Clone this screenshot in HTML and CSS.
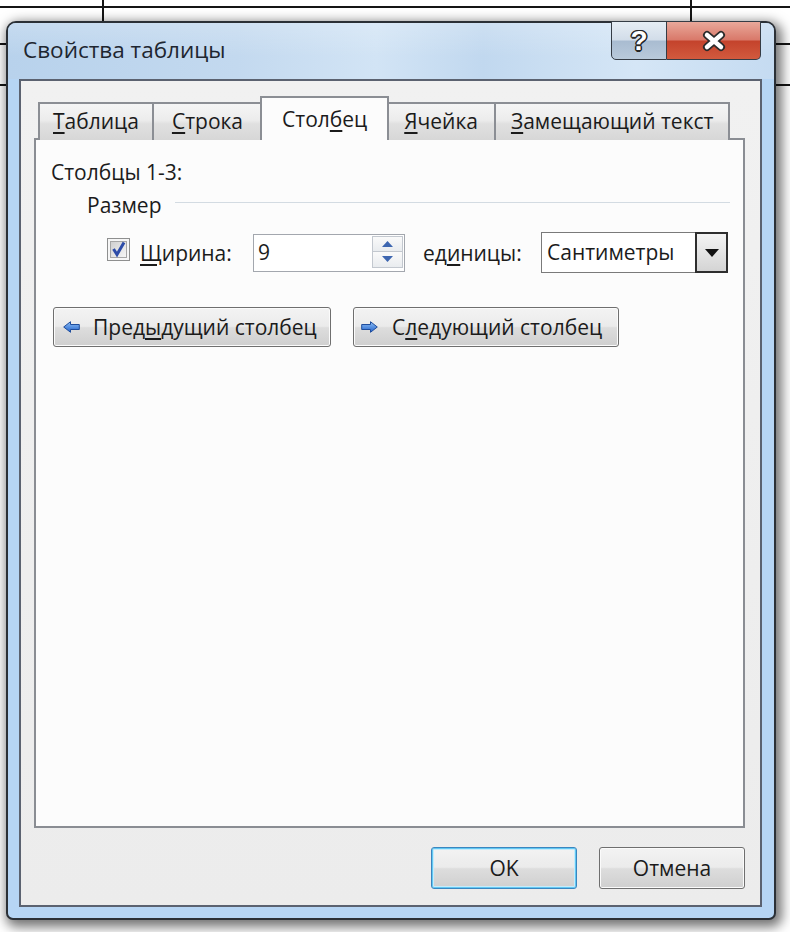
FILE: index.html
```html
<!DOCTYPE html>
<html lang="ru">
<head>
<meta charset="utf-8">
<title>Свойства таблицы</title>
<link rel="stylesheet" href="styles.css">
</head>
<body>
<div class="dialog">
  <div class="titlebar">
    <div class="title">Свойства таблицы</div>
    <div class="caption-buttons">
      <div class="cap-btn cap-help"><span class="help-glyph">?</span></div>
      <div class="cap-btn cap-close">
        <svg width="28" height="22" viewBox="0 0 28 22"><path d="M7 5 L21 17 M21 5 L7 17" stroke="#2b2b2b" stroke-width="8" stroke-linecap="round" fill="none"/><path d="M7 5 L21 17 M21 5 L7 17" stroke="#ffffff" stroke-width="4.5" stroke-linecap="round" fill="none"/></svg>
      </div>
    </div>
  </div>
  <div class="frame-body">
    <div class="client">
      <div class="tabs">
        <div class="tab tab-table"><u>Т</u>аблица</div>
        <div class="tab tab-row"><u>С</u>трока</div>
        <div class="tab active">Стол<u>б</u>ец</div>
        <div class="tab tab-cell"><u>Я</u>чейка</div>
        <div class="tab"><u>З</u>амещающий текст</div>
      </div>
      <div class="panel">
        <div class="caption">Столбцы 1-3:</div>
        <div class="group-header"><span>Размер</span><span class="rule"></span></div>
        <div class="size-row">
          <span class="checkbox">
            <svg width="23" height="23" viewBox="0 0 23 23">
              <defs><linearGradient id="cbg" x1="0" y1="0" x2="1" y2="1"><stop offset="0" stop-color="#cfcfcf"/><stop offset="1" stop-color="#f7f7f7"/></linearGradient></defs>
              <rect x="0.5" y="0.5" width="22" height="22" fill="#f6f6f6" stroke="#8e8f8f"/>
              <rect x="3.5" y="3.5" width="16" height="16" fill="url(#cbg)" stroke="#a6a6a6"/>
              <path d="M6.5 11 L10 16.5 L17 4.5" fill="none" stroke="#2d4ca8" stroke-width="3"/>
            </svg>
          </span>
          <span class="label width-label"><u>Щ</u>ирина:</span>
          <div class="spin">
            <span class="spin-value">9</span>
            <span class="spin-buttons">
              <span class="spin-half"><svg width="11" height="6" viewBox="0 0 11 6"><polygon points="0,6 5.5,0 11,6" fill="#3d66b0"/></svg></span>
              <span class="spin-half"><svg width="11" height="6" viewBox="0 0 11 6"><polygon points="0,0 5.5,6 11,0" fill="#3d66b0"/></svg></span>
            </span>
          </div>
          <span class="label units-label">ед<u>и</u>ницы:</span>
          <div class="combo">
            <span class="combo-value">Сантиметры</span>
            <span class="combo-btn"><svg width="14" height="8" viewBox="0 0 14 8"><polygon points="0,0 14,0 7,8" fill="#111"/></svg></span>
          </div>
        </div>
        <div class="nav-row">
          <button class="btn nav-btn prev-btn">
            <svg width="17" height="12" viewBox="0 0 17 12"><defs><linearGradient id="arl" x1="0" y1="0" x2="0" y2="1"><stop offset="0" stop-color="#8fc0f6"/><stop offset="1" stop-color="#2262cb"/></linearGradient></defs><polygon points="0.7,6 7.5,0.7 7.5,3.5 16.3,3.5 16.3,8.5 7.5,8.5 7.5,11.3" fill="url(#arl)" stroke="#1f4d9c" stroke-width="1" stroke-linejoin="round"/></svg>
            <span>Пред<u>ы</u>дущий столбец</span>
          </button>
          <button class="btn nav-btn next-btn">
            <svg width="17" height="12" viewBox="0 0 17 12"><defs><linearGradient id="arr" x1="0" y1="0" x2="0" y2="1"><stop offset="0" stop-color="#8fc0f6"/><stop offset="1" stop-color="#2262cb"/></linearGradient></defs><polygon points="16.3,6 9.5,0.7 9.5,3.5 0.7,3.5 0.7,8.5 9.5,8.5 9.5,11.3" fill="url(#arr)" stroke="#1f4d9c" stroke-width="1" stroke-linejoin="round"/></svg>
            <span>С<u>л</u>едующий столбец</span>
          </button>
        </div>
      </div>
      <div class="footer">
        <button class="btn footer-btn default">OK</button>
        <button class="btn footer-btn">Отмена</button>
      </div>
    </div>
  </div>
</div>
</body>
</html>
```

FILE: styles.css
```css
* { box-sizing: border-box; }

html, body {
  margin: 0;
  height: 932px;
  overflow: hidden;
}

body {
  width: 790px;
  position: relative;
  font-family: "Open Sans", "Noto Sans", "DejaVu Sans", sans-serif;
  font-size: 21px;
  color: #1b1b1b;
  background-color: #ffffff;
  background-image:
    linear-gradient(#151515, #151515),
    linear-gradient(#151515, #151515),
    linear-gradient(#151515, #151515),
    linear-gradient(#151515, #151515),
    linear-gradient(#151515, #151515);
  background-size: 100% 2px, 2px 22px, 2px 22px, 100% 2px, 100% 2px;
  background-position: 0 6px, 102px 0, 690px 0, 0 43px, 0 84px;
  background-repeat: no-repeat;
}

u {
  text-decoration: underline;
  text-decoration-thickness: 2px;
  text-underline-offset: 3px;
}

/* ---------- window ---------- */
.dialog {
  position: absolute;
  left: 6px;
  top: 21px;
  width: 770px;
  height: 899px;
  border: 2px solid #2b3036;
  border-radius: 10px 10px 7px 7px;
  background: #b6d5f4;
  box-shadow: 3px 4px 12px 3px rgba(0, 0, 0, 0.55);
  display: flex;
  flex-direction: column;
}

.titlebar {
  height: 56px;
  flex: none;
  display: flex;
  justify-content: space-between;
  align-items: flex-start;
  border-radius: 8px 8px 0 0;
  background:
    linear-gradient(180deg, rgba(255,255,255,0.2) 0%, rgba(255,255,255,0) 60%),
    linear-gradient(90deg, #b8d2ec 0%, #c3d9ef 30%, #d2e4f5 48%, #c1d8ef 62%, #d5e6f6 82%, #c5dbf1 100%);
}

.title {
  padding: 14px 0 0 15px;
  font-size: 22.5px;
  line-height: 26px;
  color: #1e2630;
}

.caption-buttons {
  display: flex;
  margin-top: -2px;
  margin-right: 13px;
}

.cap-btn {
  height: 39px;
  border: 1px solid #353c45;
  display: flex;
  align-items: center;
  justify-content: center;
}

.cap-help {
  width: 56px;
  border-radius: 0 0 0 5px;
  background: linear-gradient(180deg, #e6edf4 0%, #d2dde9 48%, #a9bcd1 52%, #b9cadb 100%);
}

.help-glyph {
  font-family: "Liberation Sans", Arial, sans-serif;
  font-weight: bold;
  font-size: 28px;
  line-height: 28px;
  color: #ffffff;
  text-shadow:
    1.5px 0 0 #262626, -1.5px 0 0 #262626, 0 1.5px 0 #262626, 0 -1.5px 0 #262626,
    1px 1px 0 #262626, -1px -1px 0 #262626, 1px -1px 0 #262626, -1px 1px 0 #262626;
}

.cap-close {
  width: 94px;
  border-left: none;
  border-radius: 0 0 5px 0;
  background: linear-gradient(180deg, #e9a89a 0%, #d9796a 48%, #c4432c 52%, #d25a3e 100%);
}

.frame-body {
  flex: 1;
  display: flex;
  padding: 0 12px 11px 11px;
  min-height: 0;
}

/* ---------- client area ---------- */
.client {
  flex: 1;
  min-width: 0;
  display: flex;
  flex-direction: column;
  border: 2px solid #5b6270;
  background: linear-gradient(180deg, #f1f1f1 0%, #ececec 100%);
  padding: 15px 15px 16px 13px;
}

.tabs {
  display: flex;
  align-items: flex-end;
  height: 44px;
  margin-left: 4px;
  margin-bottom: -2px;
  position: relative;
  z-index: 1;
}

.tab {
  height: 38px;
  padding: 5px 15px 0 15px;
  margin-left: -2px;
  border: 2px solid #8b8e94;
  border-bottom: none;
  line-height: 24px;
  white-space: nowrap;
  color: #1b1b1b;
  background: linear-gradient(180deg, #f5f5f5 0%, #ececec 45%, #e0e0e0 55%, #d7d7d7 100%);
}

.tab:first-child { margin-left: 0; }
.tab-table { padding-left: 13px; padding-right: 13px; }
.tab-row { padding-left: 18px; padding-right: 17px; }
.tab-cell { padding-left: 15px; padding-right: 16px; }

.tab.active {
  height: 44px;
  padding-top: 9px;
  padding-left: 20px;
  padding-right: 20px;
  background: #fcfcfc;
  position: relative;
  z-index: 2;
}

.panel {
  flex: 1;
  min-width: 0;
  border: 2px solid #8a8d93;
  background: #fcfcfc;
  padding: 20px 15px 0 15px;
}

.caption { line-height: 24px; }

.group-header {
  display: flex;
  align-items: center;
  margin: 9px -2px 0 36px;
  line-height: 24px;
}

.rule {
  flex: 1;
  height: 1px;
  margin: 0 0 6px 13px;
  background: #d3dbe2;
}

.size-row {
  display: flex;
  align-items: center;
  height: 41px;
  margin: 15px 0 0 56px;
}

.checkbox {
  display: flex;
  flex: none;
  width: 23px;
  height: 23px;
  margin-bottom: 6px;
}

.label { line-height: 24px; white-space: nowrap; flex: none; }
.width-label { margin-left: 10px; width: 113px; }

.spin {
  display: flex;
  flex: none;
  width: 152px;
  height: 38px;
  border: 1px solid #a3a7ae;
  background: #ffffff;
}

.spin-value {
  flex: 1;
  padding-left: 4px;
  line-height: 34px;
}

.spin-buttons {
  width: 32px;
  display: flex;
  flex-direction: column;
  padding: 1px 1px 3px 0;
}

.spin-half {
  flex: 1;
  display: flex;
  align-items: center;
  justify-content: center;
  border: 1px solid #c3c8cf;
  background: linear-gradient(180deg, #fafafa, #e9ecef);
}

.spin-half + .spin-half { border-top: none; }

.units-label { margin-left: 18px; width: 118px; }

.combo {
  display: flex;
  flex: none;
  width: 187px;
  height: 41px;
  border: 1px solid #7a7a7a;
  border-right: none;
  background: #ffffff;
}

.combo-value {
  flex: 1;
  padding-left: 5px;
  line-height: 38px;
}

.combo-btn {
  width: 33px;
  margin: -1px 0;
  display: flex;
  align-items: center;
  justify-content: center;
  border: 2px solid #2e2e2e;
  background: linear-gradient(180deg, #f3f3f3 0%, #e4e4e4 50%, #d4d4d4 100%);
}

/* ---------- buttons ---------- */
.btn {
  font: inherit;
  color: #1b1b1b;
  border: 1px solid #6f6f6f;
  border-radius: 3px;
  background: linear-gradient(180deg, #f3f3f3 0%, #ebebeb 48%, #dddddd 52%, #cfcfcf 100%);
  box-shadow: inset 0 0 0 1px #fbfbfb;
  display: flex;
  align-items: center;
  padding: 0;
  line-height: 24px;
  white-space: nowrap;
}

.nav-row {
  display: flex;
  gap: 22px;
  margin: 34px 0 0 2px;
}

.nav-btn {
  height: 40px;
  padding-left: 9px;
  gap: 13px;
}

.prev-btn { width: 278px; }
.next-btn { width: 266px; gap: 14px; padding-left: 7px; }

.footer {
  display: flex;
  justify-content: flex-end;
  gap: 22px;
  margin-top: 19px;
}

.footer-btn {
  width: 146px;
  height: 42px;
  justify-content: center;
}

.btn.default {
  border-color: #3a86c0;
  box-shadow: inset 0 0 0 1px #62c8f2, inset 0 0 0 2px #c6ebfb;
}
```
